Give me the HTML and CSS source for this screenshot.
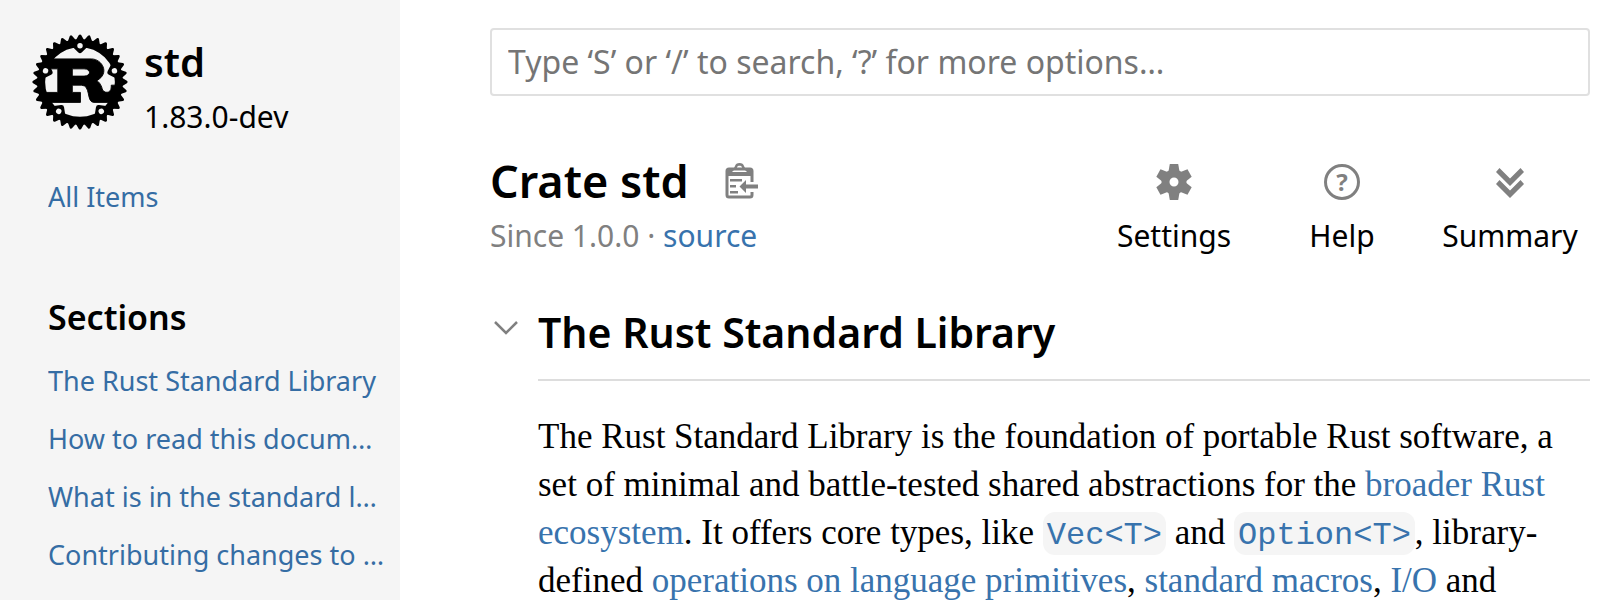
FILE: index.html
```html
<!DOCTYPE html>
<html lang="en">
<head>
    <meta charset="UTF-8">
    <meta name="viewport" content="width=device-width, initial-scale=1.0">
    <title>std - Rust</title>
    <link rel="stylesheet" href="styles.css">
</head>
<body>
    <nav class="sidebar">
        <div class="sidebar-crate">
            <a class="logo-container" href="#" aria-label="std">
                <svg class="rust-logo" viewBox="0 0 106 106" aria-hidden="true">
                    <mask id="holes">
                        <rect x="-60" y="-60" width="120" height="120" fill="white"/>
                        <circle id="hole" cy="-40" r="3"/>
                        <use href="#hole" transform="rotate(72)"/>
                        <use href="#hole" transform="rotate(144)"/>
                        <use href="#hole" transform="rotate(216)"/>
                        <use href="#hole" transform="rotate(288)"/>
                    </mask>
                    <g transform="translate(53, 53)">
                        <path transform="translate(0.5, 0.5)" stroke="black" stroke-width="1" stroke-linejoin="round" d="M -9,-15 H 4 C 12,-15 12,-7 4,-7 H -9 Z M -40,22 H 0 V 11 H -9 V 3 H 1 C 12,3 6,22 15,22 H 40 V 3 H 34 V 5 C 34,13 25,12 24,7 C 23,2 19,-2 18,-2 C 33,-10 24,-26 12,-26 H -35 V -15 H -25 V 11 H -40 Z"/>
                        <g mask="url(#holes)">
                            <circle r="43" fill="none" stroke="black" stroke-width="9"/>
                            <!-- 32 cogs, doubled up from one -->
                            <g id="cogs16">
                                <g id="cogs8">
                                    <g id="cogs4">
                                        <g id="cogs2">
                                            <polygon id="cog" stroke="black" stroke-width="3" stroke-linejoin="round" points="46,3 51,0 46,-3"/>
                                            <use href="#cog" transform="rotate(11.25)"/>
                                        </g>
                                        <use href="#cogs2" transform="rotate(22.5)"/>
                                    </g>
                                    <use href="#cogs4" transform="rotate(45)"/>
                                </g>
                                <use href="#cogs8" transform="rotate(90)"/>
                            </g>
                            <use href="#cogs16" transform="rotate(180)"/>
                            <polygon id="mount" stroke="black" stroke-width="6" stroke-linejoin="round" points="-7,-42 0,-35 7,-42"/>
                            <use href="#mount" transform="rotate(72)"/>
                            <use href="#mount" transform="rotate(144)"/>
                            <use href="#mount" transform="rotate(216)"/>
                            <use href="#mount" transform="rotate(288)"/>
                        </g>
                    </g>
                </svg>
            </a>
            <div>
                <h2 class="crate-name"><a href="#">std</a></h2>
                <div class="version">1.83.0-dev</div>
            </div>
        </div>
        <ul class="block">
            <li><a href="#">All Items</a></li>
        </ul>
        <h3 class="sidebar-title">Sections</h3>
        <ul class="block">
            <li><a href="#">The Rust Standard Library</a></li>
            <li><a href="#">How to read this docum…</a></li>
            <li><a href="#">What is in the standard l…</a></li>
            <li><a href="#">Contributing changes to …</a></li>
        </ul>
    </nav>

    <main>
        <form class="search-form">
            <input class="search-input" type="search" aria-label="Search" placeholder="Type ‘S’ or ‘/’ to search, ‘?’ for more options…">
        </form>

        <div class="main-heading">
            <div>
                <div class="heading-row">
                    <h1>Crate std</h1>
                    <button class="copy-path" type="button" aria-label="Copy item path">
                        <svg width="34" height="36" viewBox="0 0 34 36" fill="#808080" aria-hidden="true">
                            <path d="M27 19V8a2 2 0 0 0-2-2H4a2 2 0 0 0-2 2V32a2 2 0 0 0 2 2H25a2 2 0 0 0 2-2V29" fill="none" stroke="#808080" stroke-width="3"/>
                            <path fill-rule="evenodd" d="M2 5H9L10 3C10.500 1 12 0 14.500 0S18.500 1 19 3L20 5H27V13H2ZM7 9H22L20 7C18 7 17 6 17 4.500C17 2 12 2 12 4.500C12 6 11 7 9 7Z"/>
                            <path d="M5 16H17V18.500H5ZM5 22H11V24.500H5ZM5 28H13V30.500H5Z"/>
                            <path d="M14.500 23.500L21 17V21.500H33V25.500H21V30Z"/>
                        </svg>
                    </button>
                </div>
                <div class="sub-heading">Since 1.0.0 · <a href="#">source</a></div>
            </div>
            <div class="toolbar">
                <button type="button">
                    <svg width="36" height="36" viewBox="-18 -18 36 36" fill="#808080" aria-hidden="true">
                        <circle r="8.500" fill="none" stroke="#808080" stroke-width="8"/>
                        <path id="tooth" d="M-4.200-18H4.200L5.600-10H-5.600Z"/>
                        <use href="#tooth" transform="rotate(60)"/>
                        <use href="#tooth" transform="rotate(120)"/>
                        <use href="#tooth" transform="rotate(180)"/>
                        <use href="#tooth" transform="rotate(240)"/>
                        <use href="#tooth" transform="rotate(300)"/>
                    </svg>
                    Settings
                </button>
                <button type="button">
                    <svg width="36" height="36" viewBox="0 0 36 36" aria-hidden="true">
                        <circle cx="18" cy="18" r="16.500" fill="none" stroke="#808080" stroke-width="3"/>
                        <text class="help-mark" x="18" y="27" text-anchor="middle">?</text>
                    </svg>
                    Help
                </button>
                <button type="button">
                    <svg width="36" height="36" viewBox="0 0 36 36" fill="#808080" aria-hidden="true">
                        <path d="M4 8L7.500 4L18 14.500L28.500 4L32 8L18 22ZM4 20L7.500 16L18 26.500L28.500 16L32 20L18 34Z"/>
                    </svg>
                    Summary
                </button>
            </div>
        </div>

        <details class="top-doc" open>
            <summary aria-label="Description">
                <svg width="24" height="16" viewBox="0 0 24 16" aria-hidden="true">
                    <path d="M1 2L12 13L23 2" fill="none" stroke="#808080" stroke-width="2.500"/>
                </svg>
            </summary>
            <div class="docblock">
                <h2>The Rust Standard Library</h2>
                <p>The Rust Standard Library is the foundation of portable Rust software, a set of minimal and battle-tested shared abstractions for the <a href="#">broader Rust ecosystem</a>. It offers core types, like <a href="#"><code>Vec&lt;T&gt;</code></a> and <a href="#"><code>Option&lt;T&gt;</code></a>, library-defined <a href="#">operations on language primitives</a>, <a href="#">standard macros</a>, <a href="#">I/O</a> and</p>
            </div>
        </details>
    </main>
</body>
</html>
```
FILE: styles.css
```css
* {
    box-sizing: border-box;
}
body {
    display: flex;
    height: 100vh;
    margin: 0;
    overflow: hidden;
    font-family: "Noto Sans", sans-serif;
    font-size: 30px;
    color: #000;
    background-color: #fff;
}
h1, h2, h3 {
    margin: 0;
    font-weight: 600;
}
a {
    color: #3873ad;
    text-decoration: none;
}
button {
    padding: 0;
    border: none;
    background: none;
    font: inherit;
    color: inherit;
    cursor: pointer;
}
svg {
    display: block;
}

/* sidebar */
.sidebar {
    flex: 0 0 400px;
    padding: 34px 16px 0 32px;
    background-color: #f5f5f5;
    overflow: hidden;
}
.sidebar-crate {
    display: flex;
    gap: 16px;
    margin-bottom: 24px;
}
.rust-logo {
    width: 96px;
    height: 96px;
}
.crate-name {
    font-size: 40px;
    line-height: 56px;
}
.crate-name a {
    color: #000;
}
.version {
    line-height: 54px;
}
.block {
    margin: 0;
    padding: 0 0 0 16px;
    list-style: none;
    font-size: 27px;
    line-height: 58px;
}
.block a {
    display: block;
    overflow: hidden;
    white-space: nowrap;
    text-overflow: ellipsis;
    color: #356da4;
}
.sidebar-title {
    margin: 59px 0 3px;
    padding-left: 16px;
    font-size: 34px;
    line-height: 64px;
}

/* main column */
main {
    flex: 1;
    min-width: 0;
    padding: 28px 30px 0 90px;
}
.search-input {
    display: block;
    width: 100%;
    height: 68px;
    padding: 0 16px 2px;
    border: 2px solid #e0e0e0;
    border-radius: 4px;
    outline: none;
    font: inherit;
    font-size: 32px;
    appearance: none;
}
.search-input::placeholder {
    color: #757575;
    opacity: 1;
}
.main-heading {
    display: flex;
    justify-content: space-between;
    margin-top: 53px;
}
.heading-row {
    display: flex;
    align-items: center;
    gap: 36px;
}
h1 {
    font-size: 45px;
    line-height: 64px;
}
.sub-heading {
    margin-top: 1px;
    line-height: 44px;
    color: #808080;
}
.toolbar {
    display: grid;
    grid-template-columns: repeat(3, 136px);
    gap: 32px;
    padding: 15px 12px 0 0;
}
.toolbar button {
    display: flex;
    flex-direction: column;
    align-items: center;
    gap: 14px;
    line-height: 44px;
}
.help-mark {
    font-size: 24px;
    font-weight: 700;
    fill: #808080;
}

/* description */
.top-doc {
    position: relative;
    margin-top: 44px;
}
.top-doc summary {
    position: absolute;
    top: 18px;
    left: 4px;
    list-style: none;
    cursor: pointer;
}
.docblock {
    padding-left: 48px;
    font-family: "Liberation Serif", serif;
    font-size: 35px;
    line-height: 48px;
}
.docblock h2 {
    padding-bottom: 17px;
    border-bottom: 2px solid #ddd;
    font-family: "Noto Sans", sans-serif;
    font-size: 41px;
    line-height: 60px;
}
.docblock p {
    margin: 32px 0;
}
.docblock code {
    padding: 5px 4px 1px;
    border-radius: 12px;
    font-family: "Liberation Mono", monospace;
    font-size: 32px;
    line-height: 40px;
    background-color: #f5f5f5;
}
```
